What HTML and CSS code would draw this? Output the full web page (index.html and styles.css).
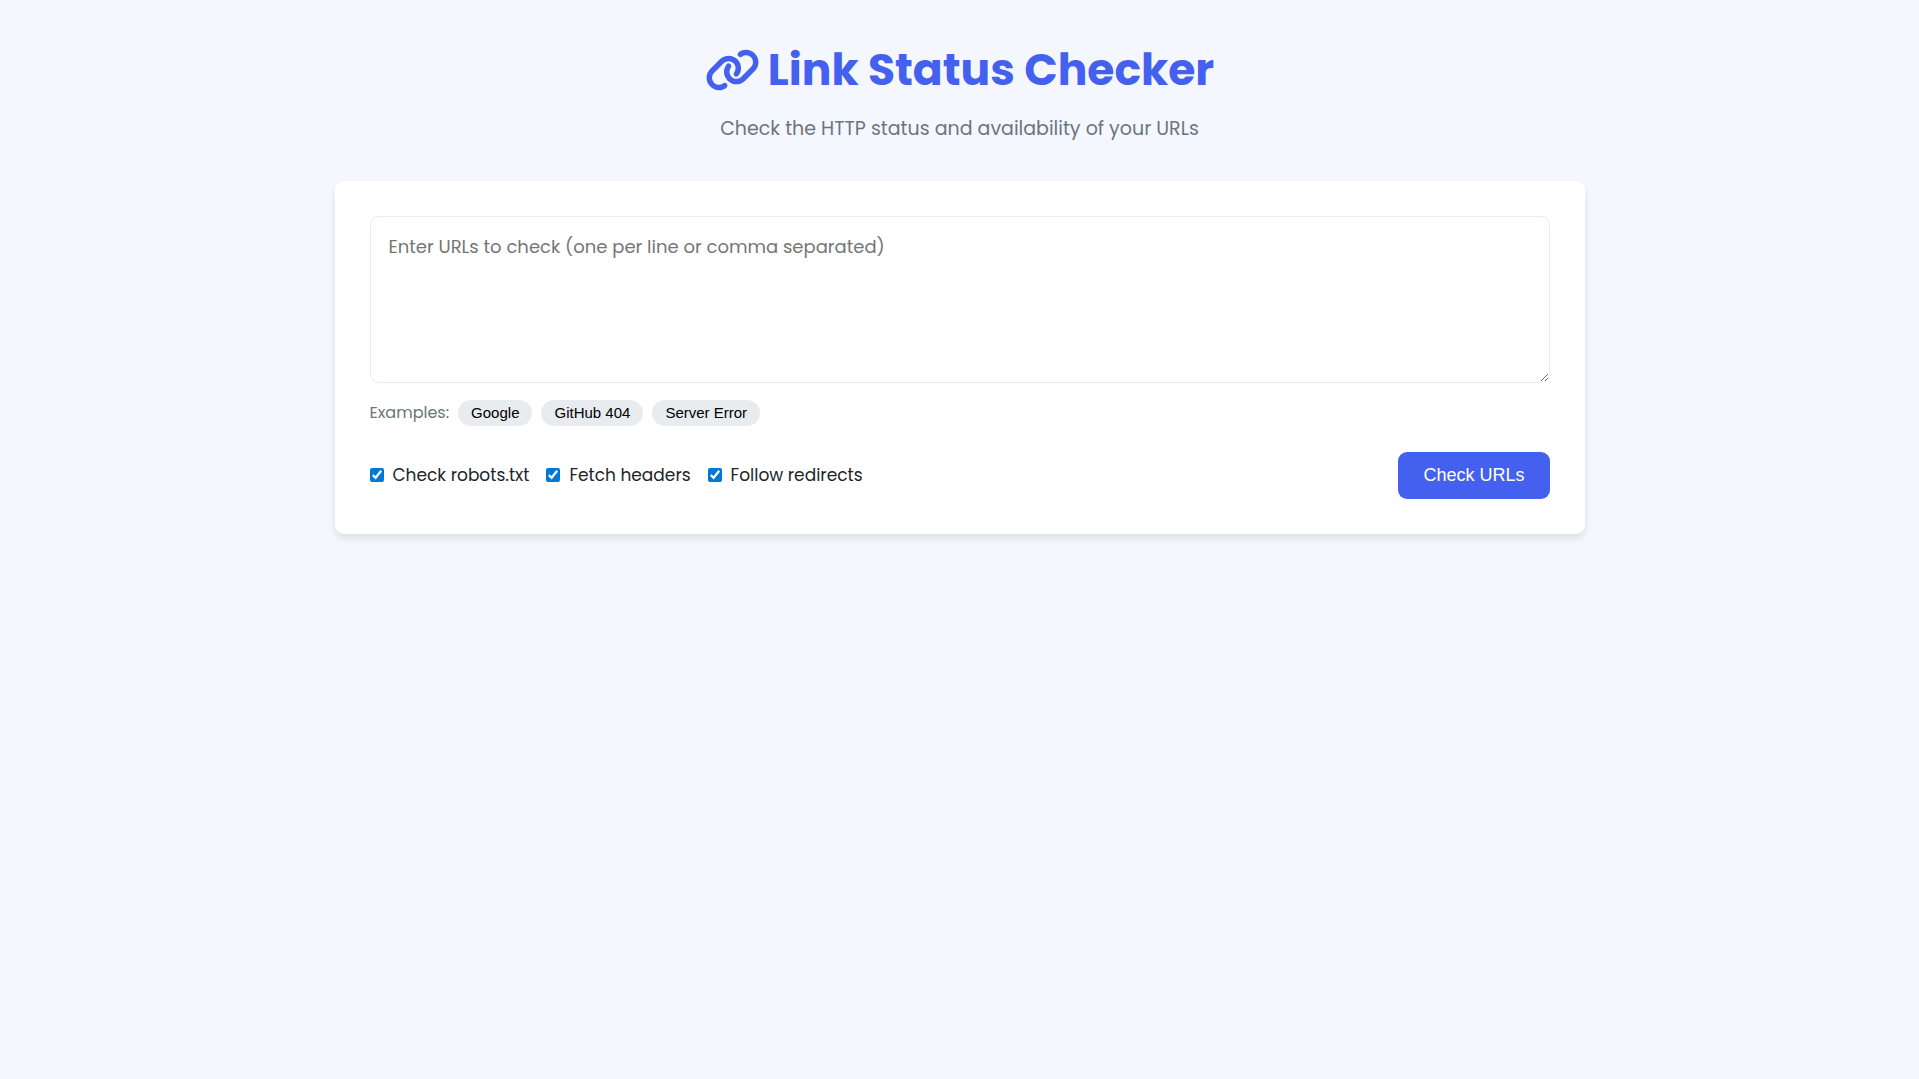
FILE: index.html
```html
<!DOCTYPE html>
<html lang="en">
<head>
  <meta charset="UTF-8">
  <meta name="viewport" content="width=device-width, initial-scale=1.0">
  <title>Link Status Checker</title>
  <link rel="stylesheet" href="styles.css">
</head>
<body>
  <div class="container">
    <header>
      <h1>
        <svg class="icon" viewBox="0 0 640 512" aria-hidden="true"><path fill="currentColor" d="M579.8 267.7c56.5-56.5 56.5-148 0-204.5c-50-50-128.8-56.5-186.3-15.4l-1.6 1.1c-14.4 10.3-17.7 30.3-7.4 44.6s30.3 17.7 44.6 7.4l1.6-1.1c32.1-22.9 76-19.3 103.8 8.6c31.5 31.5 31.5 82.5 0 114L422.3 334.8c-31.5 31.5-82.5 31.5-114 0c-27.9-27.9-31.5-71.8-8.6-103.8l1.1-1.6c10.3-14.4 6.9-34.4-7.4-44.6s-34.4-6.9-44.6 7.4l-1.1 1.6C206.5 251.2 213 330 263 380c56.5 56.5 148 56.5 204.5 0L579.8 267.7zM60.2 244.3c-56.5 56.5-56.5 148 0 204.5c50 50 128.8 56.5 186.3 15.4l1.6-1.1c14.4-10.3 17.7-30.3 7.4-44.6s-30.3-17.7-44.6-7.4l-1.6 1.1c-32.1 22.9-76 19.3-103.8-8.6C74 372 74 321 105.5 289.5L217.7 177.2c31.5-31.5 82.5-31.5 114 0c27.9 27.9 31.5 71.8 8.6 103.9l-1.1 1.6c-10.3 14.4-6.9 34.4 7.4 44.6s34.4 6.9 44.6-7.4l1.1-1.6C433.5 260.8 427 182 377 132c-56.5-56.5-148-56.5-204.5 0L60.2 244.3z"/></svg>
        Link Status Checker
      </h1>
      <p class="subtitle">Check the HTTP status and availability of your URLs</p>
    </header>

    <main class="card">
      <form>
        <textarea id="urlInput" aria-label="URLs" placeholder="Enter URLs to check (one per line or comma separated)"></textarea>

        <div class="examples">
          <span>Examples:</span>
          <button type="button" class="example-btn">Google</button>
          <button type="button" class="example-btn">GitHub 404</button>
          <button type="button" class="example-btn">Server Error</button>
        </div>

        <div class="controls">
          <div class="options">
            <label for="checkRobots"><input type="checkbox" id="checkRobots" checked> Check robots.txt</label>
            <label for="fetchHeaders"><input type="checkbox" id="fetchHeaders" checked> Fetch headers</label>
            <label for="followRedirects"><input type="checkbox" id="followRedirects" checked> Follow redirects</label>
          </div>
          <button type="button" id="checkBtn" class="btn-primary">Check URLs</button>
        </div>
      </form>
    </main>
  </div>
</body>
</html>
```

FILE: styles.css
```css
:root {
  --primary: #4361ee;
  --dark: #212529;
  --gray: #6c757d;
  --light-gray: #e9ecef;
}
* {
  margin: 0;
  padding: 0;
  box-sizing: border-box;
}
body {
  font-family: Poppins, Inter, sans-serif;
  font-size: 17px;
  line-height: 1.6;
  color: var(--dark);
  background: #f5f7ff;
}
.container {
  max-width: 1320px;
  margin: 0 auto;
  padding: 35px;
}
header {
  margin-bottom: 36px;
  text-align: center;
}
h1 {
  display: flex;
  align-items: center;
  justify-content: center;
  gap: 8px;
  margin-bottom: 9px;
  font-size: 44px;
  font-weight: 700;
  color: var(--primary);
}
.icon {
  width: 55px;
  height: 44px;
}
.subtitle {
  font-size: 19px;
  color: var(--gray);
}
.card {
  padding: 35px;
  background: white;
  border-radius: 9px;
  box-shadow: 0 4px 7px rgba(0, 0, 0, 0.1);
}
textarea {
  display: block;
  width: 100%;
  height: 167px;
  padding: 16px 18px;
  border: 1px solid var(--light-gray);
  border-radius: 9px;
  font-family: inherit;
  font-size: 18px;
  line-height: 28px;
  resize: vertical;
}
textarea::placeholder {
  color: #757575;
}
.examples {
  display: flex;
  align-items: center;
  gap: 9px;
  margin-top: 17px;
  font-size: 16px;
  line-height: 26px;
  color: var(--gray);
}
.example-btn {
  height: 26px;
  padding: 0 13px;
  border: none;
  border-radius: 13px;
  background: var(--light-gray);
  font-family: "Liberation Sans", Arial, sans-serif;
  font-size: 15px;
  color: black;
  cursor: pointer;
}
.controls {
  display: flex;
  flex-wrap: wrap;
  align-items: center;
  justify-content: space-between;
  gap: 18px;
  margin-top: 26px;
}
.options {
  display: flex;
  flex-wrap: wrap;
  gap: 17px;
}
.options label {
  display: flex;
  align-items: center;
  gap: 9px;
  cursor: pointer;
}
.options input {
  width: 14px;
  height: 14px;
  accent-color: #0078d4;
}
.btn-primary {
  height: 47px;
  padding: 0 25px;
  border: none;
  border-radius: 9px;
  background: var(--primary);
  font-family: "Liberation Sans", Arial, sans-serif;
  font-size: 18px;
  color: white;
  cursor: pointer;
}
```
